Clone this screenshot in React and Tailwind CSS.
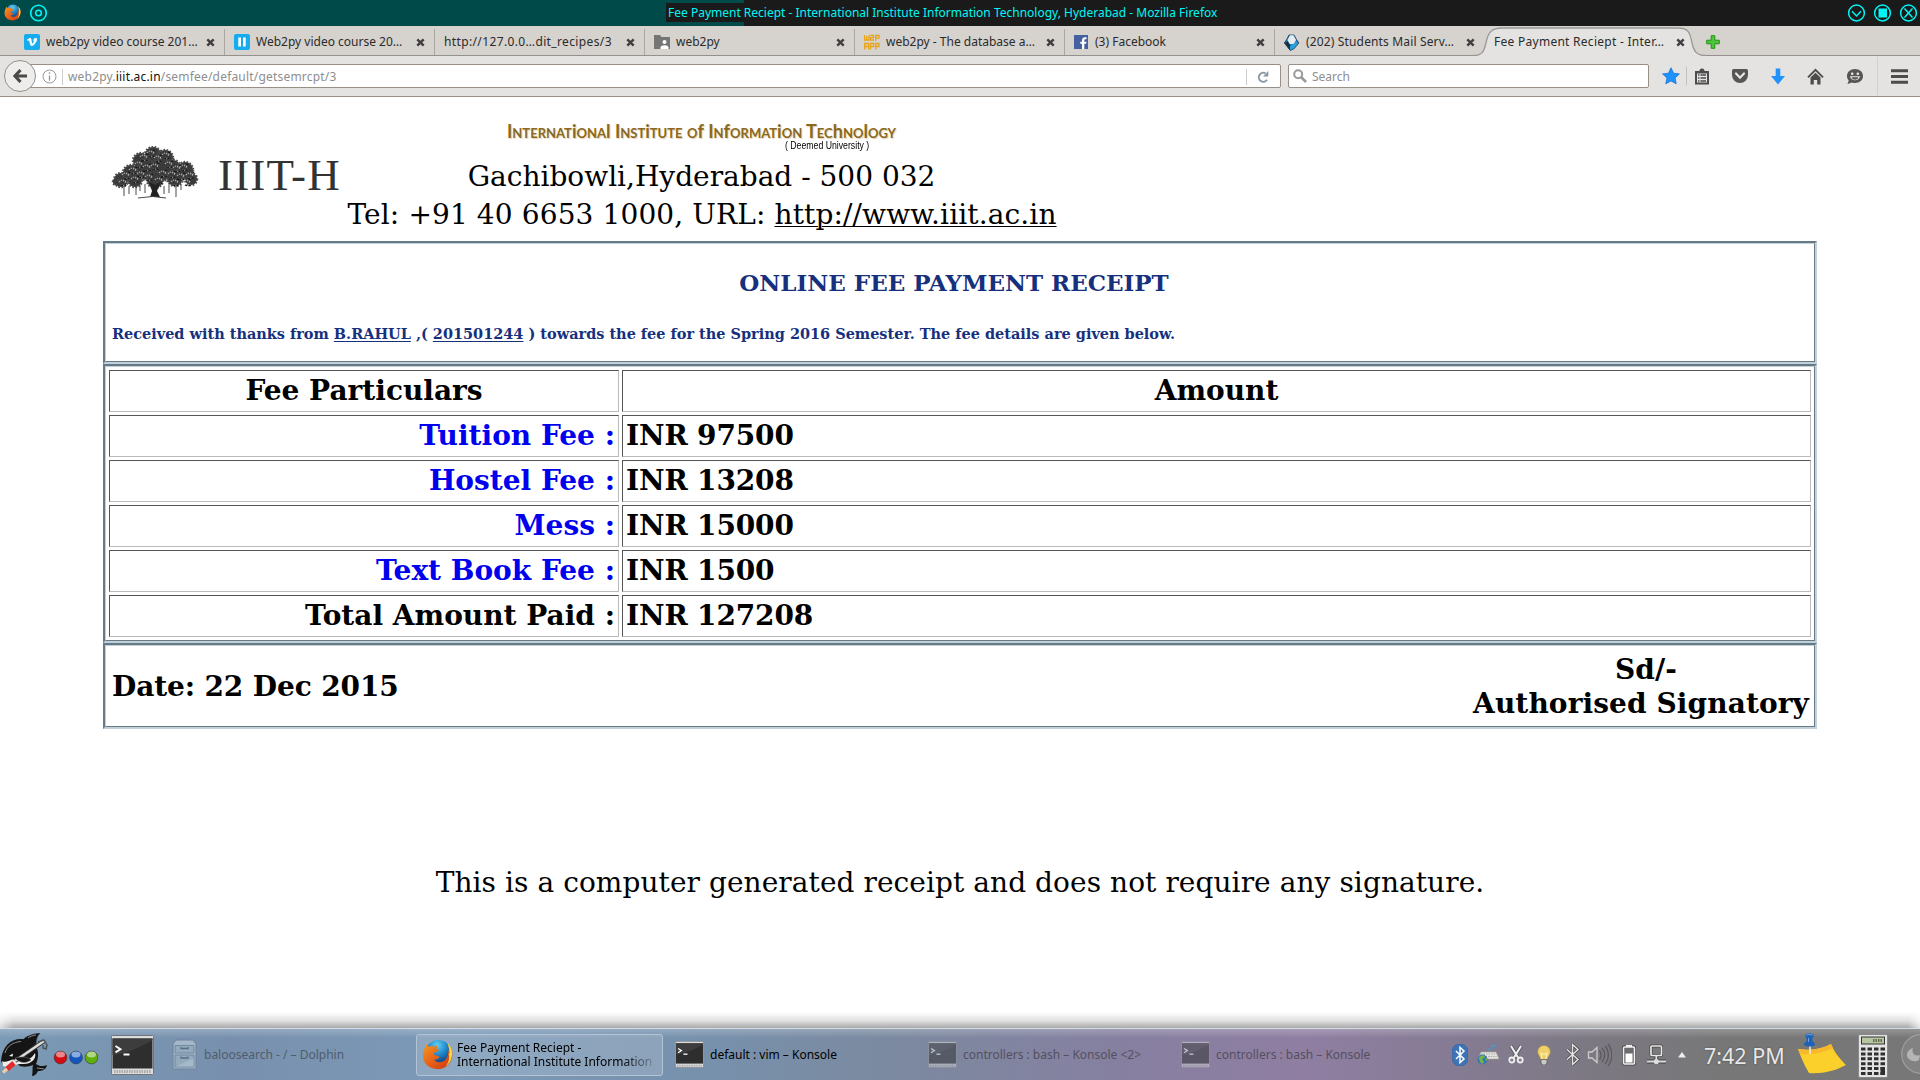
import React from 'react';

const UI = 'font-["Noto_Sans",sans-serif]';
const SERIF = 'font-["DejaVu_Serif",serif]';

/* ---------- icons ---------- */

function Firefox({ size, id }) {
  return (
    <svg width={size} height={size} viewBox="0 0 32 32" className="shrink-0">
      <defs>
        <radialGradient id={id + 'b'} cx="0.45" cy="0.2" r="0.8">
          <stop offset="0" stopColor="#5fd0f5" />
          <stop offset="0.5" stopColor="#1c7fc4" />
          <stop offset="1" stopColor="#122a66" />
        </radialGradient>
        <linearGradient id={id + 'o'} x1="0" y1="0" x2="1" y2="1">
          <stop offset="0" stopColor="#f39a1f" />
          <stop offset="0.5" stopColor="#e8611a" />
          <stop offset="1" stopColor="#c73514" />
        </linearGradient>
      </defs>
      <circle cx="17" cy="14.5" r="13.5" fill={`url(#${id}b)`} />
      <path d="M27 5c4 4 5 9 4 14-2 8-8 12-15 12C7 31 1 25 1 17c0-4 1-6 2-8l1-4 3 3c2-1 4-1 6 0l3-2-1 4c2 0 2 1 2 2l-4 2c-2 2 0 3 2 3l3 1c-1 3-5 4-6 3 2 3 6 4 10 2 4-2 6-8 5-12l2 1c0-3-1-5-2-7z" fill={`url(#${id}o)`} />
      <path d="M26 4c5 4 6 10 4.500 15-1 4-3 7-6 9 4-5 4-9 3-13l1 0c0-4-1-8-2.500-11z" fill="#fbd83a" />
    </svg>
  );
}

function CloseX() {
  return (
    <svg width="9" height="9" viewBox="0 0 9 9" className="shrink-0">
      <path d="M1.300 1.300l6.400 6.400M7.700 1.300L1.300 7.700" stroke="#3f3f3f" strokeWidth="2.400" />
    </svg>
  );
}

const Vimeo = () => (
  <svg width="16" height="16" viewBox="0 0 16 16" className="shrink-0">
    <rect width="16" height="16" rx="2" fill="#16adee" />
    <path d="M3 5.800L5.600 4c1-.4 1.600.3 1.800 1.400l.6 3.300c.2.900.6.900 1 .2l.8-1.500c.3-.7 0-1-.8-.8C9.500 4.800 10.600 4 11.800 4c1.300.1 1.600 1.200 1 2.800-.8 2-2.900 4.700-4.600 5.200-1.200.2-1.800-.6-2.100-1.700l-.9-3.500c-.2-.6-.6-.4-1.400.1z" fill="#fff" />
  </svg>
);
const Pause = () => (
  <svg width="16" height="16" viewBox="0 0 16 16" className="shrink-0">
    <rect width="16" height="16" rx="2" fill="#16adee" />
    <path d="M4.300 3.500h2.700v9H4.300zM9 3.500h2.700v9H9z" fill="#fff" />
  </svg>
);
const Folder = () => (
  <svg width="16" height="16" viewBox="0 0 16 16" className="shrink-0">
    <path d="M0 1h6l1.500 2H16v12H0z" fill="#757575" />
    <circle cx="10.500" cy="8" r="2" fill="#fff" />
    <path d="M6.500 15v-1.500c0-3 8-3 8 0V15z" fill="#fff" />
  </svg>
);
const W2p = () => (
  <svg width="16" height="16" viewBox="0 0 16 16" className="shrink-0" fill="none" stroke="#e8a317" strokeWidth="1.300">
    <path d="M.5 1v5h4.500V1M2.700 2v4M6.300 1.500H9.500v2.200H6.500v2.300H10M11.700 7v-5.500h3.300v2.700h-3.300M.7 15.500V9.500h4V15.500M.7 12.500h4M6.500 15.500v-6H9.700v3H6.500M11.700 15.500v-6h3.300v3h-3.300" />
  </svg>
);
const Facebook = () => (
  <svg width="14" height="14" viewBox="0 0 14 14" className="shrink-0">
    <rect width="14" height="14" fill="#4460a0" />
    <path d="M8 14V8.800H6.300V6.700H8V5.200c0-2 1.200-3 3-3h1.500v2h-1c-1 0-1.200.4-1.200 1.200v1.300h2.200l-.3 2.100h-1.900V14z" fill="#fff" />
  </svg>
);
const Zimbra = () => (
  <svg width="15" height="17" viewBox="0 0 15 17" className="shrink-0">
    <path d="M3 5L5 1h5l2.500 4.500 2.300 3.500-4.500 5.500-4 2L.3 9z" fill="#1d7fb8" stroke="#173a55" strokeWidth=".8" />
    <path d="M3.500 6L6 1.300h3.500L12 6l-2 4H5z" fill="#e6edf2" />
    <path d="M.8 9l3-2 3 5-1 4z" fill="#17334a" />
    <path d="M6 12l6-4 2 1-3.800 5-4 2z" fill="#2aa0dd" />
  </svg>
);

/* ---------- browser chrome ---------- */

function TitleBar() {
  return (
    <div className="flex h-[26px] items-center bg-[linear-gradient(to_right,#004b49_744px,#1a1a1a_744px)]">
      <div className="flex w-[666px] items-center gap-[9px] pb-px pl-1">
        <Firefox size={17} id="tf" />
        <svg width="18" height="18" viewBox="0 0 18 18" fill="none" stroke="#00f6f6">
          <circle cx="8.500" cy="9" r="7.800" strokeWidth="1.600" />
          <circle cx="8.500" cy="9" r="2.800" strokeWidth="1.500" />
        </svg>
      </div>
      <div className={`${UI} -mt-px h-[19px] w-[555px] whitespace-nowrap bg-[#1a1a1a] pl-[2px] text-[12px] leading-[19px] text-[#00f6f6]`}>
        Fee Payment Reciept - International Institute Information Technology, Hyderabad - Mozilla Firefox
      </div>
      <svg width="71" height="18" viewBox="0 0 71 18" fill="none" stroke="#00f6f6" strokeWidth="1.500" className="mb-px ml-auto mr-[2px]">
        <circle cx="9.500" cy="9" r="7.900" />
        <path d="M5 7.300l4.500 4.700L14 7.300" />
        <circle cx="35.500" cy="9" r="7.900" />
        <rect x="31.500" y="4.500" width="8.500" height="9" fill="#00f6f6" stroke="none" />
        <circle cx="61.500" cy="9" r="7.900" />
        <path d="M57.500 4.500l8 9M65.500 4.500l-8 9" />
      </svg>
    </div>
  );
}

const TABS = [
  { icon: <Vimeo />, gap: 'gap-[6px]', label: 'web2py video course 201…', track: '' },
  { icon: <Pause />, gap: 'gap-[6px]', label: 'Web2py video course 20…', track: '' },
  { icon: null, gap: '', label: 'http://127.0.0…dit_recipes/3', track: 'tracking-[0.37px]' },
  { icon: <Folder />, gap: 'gap-[6px]', label: 'web2py', track: '' },
  { icon: <W2p />, gap: 'gap-[6px]', label: 'web2py - The database a…', track: '' },
  { icon: <Facebook />, gap: 'gap-[7px]', label: '(3) Facebook', track: '' },
  { icon: <Zimbra />, gap: 'gap-[7px]', label: '(202) Students Mail Serv…', track: 'tracking-[0.15px]' },
];

function TabStrip() {
  return (
    <div className={`${UI} flex h-[30px] border-b border-[#93908d] bg-[#d6d2ce] pl-[15px] text-[12px] text-[#2b2b2b]`}>
      {TABS.map((t, i) => (
        <div key={i} className="flex w-[210px] items-center pb-[1px] pt-[4px]">
          <div className={`flex h-full flex-1 items-center whitespace-nowrap pl-[9px] ${t.gap}`}>
            {t.icon}
            <span className={t.track}>{t.label}</span>
          </div>
          <CloseX />
          <div className={i === 6 ? 'ml-[9px] w-px' : 'ml-[9px] h-[26px] w-px bg-[#aaa6a2]'} />
        </div>
      ))}
      <div className="relative flex w-[210px] items-center pb-[1px] pt-[4px]">
        <svg width="240" height="30" viewBox="0 0 240 30" className="absolute -left-[12px] top-0">
          <path d="M0 30C9 30 11 26 13 17 15 6 19 2 29 2h176c10 0 12 4 14 15 2 9 5 13 14 13z" fill="#e5e3e1" />
          <path d="M0 29.500C9 29.500 11 26 13 17 15 6 19 2 29 2h176c10 0 12 4 14 15 2 9 5 12.500 14 12.500" fill="none" stroke="#9a9797" strokeWidth="1.300" />
        </svg>
        <span className="relative flex-1 whitespace-nowrap pl-[9px] tracking-[0.27px]">Fee Payment Reciept - Inter…</span>
        <span className="relative mr-[10px] flex"><CloseX /></span>
      </div>
      <svg width="14" height="14" viewBox="0 0 14 14" className="relative ml-[11px] mt-[9px]">
        <path d="M5.200.7h3.600v4.500h4.500v3.600H8.800v4.500H5.200V8.800H.7V5.200h4.500z" fill="#4fc53c" stroke="#1f9410" />
      </svg>
    </div>
  );
}

function NavBar() {
  return (
    <div className={`${UI} flex h-[41px] items-center border-b border-[#989087] bg-[#e5e3e1] text-[12px]`}>
      <div className="z-10 ml-[4px] flex size-[32px] shrink-0 items-center justify-center rounded-full border border-[#989087] bg-[#eeedec]">
        <svg width="16" height="16" viewBox="0 0 16 16">
          <path d="M8.500 2L3 8l5.500 6M3.500 8H15" fill="none" stroke="#4a4a4a" strokeWidth="3.200" />
        </svg>
      </div>
      <div className="-ml-[8px] flex h-[24px] w-[1253px] items-center rounded-r-[2px] border border-[#989087] bg-white pt-px">
        <svg width="15" height="15" viewBox="0 0 15 15" className="ml-[13px]" fill="none" stroke="#999">
          <circle cx="7.500" cy="7.500" r="6.500" />
          <path d="M7.500 6.500v5M7.500 3.300v1.700" strokeWidth="1.300" />
        </svg>
        <div className="ml-[5px] h-[16px] w-px bg-[#ccc]" />
        <div className="ml-[5px] tracking-[0.19px] text-[#8e8e8e]">
          web2py.<span className="text-[#111]">iiit.ac.in</span>/semfee/default/getsemrcpt/3
        </div>
        <div className="ml-auto h-[16px] w-px bg-[#ccc]" />
        <svg width="14" height="14" viewBox="0 0 14 14" className="ml-[9px] mr-[10px]">
          <path d="M9.500 3.300A4.500 4.500 0 1 0 11 9.800" fill="none" stroke="#8a98a5" strokeWidth="2" />
          <path d="M12.300 1v5.500H7z" fill="#8a98a5" />
        </svg>
      </div>
      <div className="ml-[7px] flex h-[24px] w-[361px] items-center rounded-[2px] border border-[#989087] bg-white pt-px text-[#8e8e8e]">
        <svg width="14" height="14" viewBox="0 0 14 14" className="mb-[2px] ml-[4px] mr-[5px]" fill="none" stroke="#999">
          <circle cx="5.200" cy="5.200" r="4" strokeWidth="2" />
          <path d="M8 8l5 5" strokeWidth="2.600" />
        </svg>
        <span>Search</span>
      </div>
      <div className="flex flex-1 items-center">
        <svg width="18" height="18" viewBox="0 0 18 18" className="ml-[13px]">
          <path d="M9 .8l2.500 5.400 5.900.7-4.400 4 1.200 5.900L9 13.900l-5.200 2.900L5 10.900l-4.400-4 5.900-.7z" fill="#1f93fb" stroke="#1071d6" strokeWidth=".8" />
        </svg>
        <div className="ml-[6px] h-[18px] w-px bg-[#c4c1be]" />
        <svg width="16" height="17" viewBox="0 0 16 17" className="ml-[7px]">
          <path d="M1 3h4.500a2.500 2.500 0 0 1 5 0H15v13.500H1z" fill="#4c4c4c" />
          <path d="M3 5.500h10v9H3z" fill="#e5e3e1" />
          <path d="M4 7h1.500M6.500 7H12M4 10h1.500M6.500 10H12M4 13h1.500M6.500 13H12" stroke="#4c4c4c" strokeWidth="1.500" />
        </svg>
        <svg width="18" height="16" viewBox="0 0 18 16" className="ml-[21px]">
          <path d="M2.500 1h13a1.500 1.500 0 0 1 1.500 1.500V7a8 8 0 0 1-16 0V2.500A1.500 1.500 0 0 1 2.500 1z" fill="#565656" />
          <path d="M5 5.500L9 9.700l4-4.200" fill="none" stroke="#e9e8e6" strokeWidth="2.200" strokeLinecap="round" />
        </svg>
        <svg width="16" height="17" viewBox="0 0 16 17" className="ml-[21px]">
          <path d="M5.700.5h4.600v7.500H15L8 16.500 1 8h4.700z" fill="#1f93fb" />
        </svg>
        <svg width="17" height="17" viewBox="0 0 17 17" className="ml-[21px]">
          <path d="M1 9.300L8.500 1.800 16 9.300" fill="none" stroke="#4c4c4c" strokeWidth="1.900" />
          <path d="M3.500 9.500l5-4.800 5 4.800v7h-3.300V12H6.800v4.500H3.500z" fill="#4c4c4c" />
        </svg>
        <svg width="18" height="17" viewBox="0 0 18 17" className="ml-[22px]">
          <path d="M9 1c4.700 0 8 3 8 7s-3.300 7-8 7c-1 0-2-.1-3-.5L1.500 16l1.200-3.500C1.600 11.300 1 9.700 1 8c0-4 3.300-7 8-7z" fill="#565656" />
          <circle cx="6.200" cy="5.800" r="1.300" fill="#e9e8e6" />
          <circle cx="11.800" cy="5.800" r="1.300" fill="#e9e8e6" />
          <path d="M4 8.300h10c-.8 5.200-9.200 5.200-10 0z" fill="#e9e8e6" />
          <path d="M5.500 9.300h7c-.8 3.200-6.200 3.200-7 0z" fill="#565656" />
        </svg>
        <div className="ml-[13px] h-[38px] w-px bg-[#d3d0cd]" />
        <svg width="17" height="15" viewBox="0 0 17 15" className="ml-[13px]">
          <path d="M0 1.700h17M0 7.500h17M0 13.300h17" stroke="#4c4c4c" strokeWidth="3" />
        </svg>
      </div>
    </div>
  );
}

/* ---------- page ---------- */

const CANOPY = [
  [10, 34, 8], [20, 27, 9], [30, 15, 9], [42, 9, 9], [54, 12, 9], [62, 21, 8], [74, 24, 9], [80, 33, 7],
  [36, 24, 11], [50, 24, 12], [64, 32, 9], [24, 34, 8], [44, 34, 9], [5, 36, 4],
];
const LIGHTS = [
  [15, 29], [22, 24], [28, 18], [33, 11], [40, 7], [47, 12], [55, 9], [58, 18], [66, 22], [73, 21], [79, 29],
  [70, 30], [61, 28], [52, 27], [44, 20], [36, 21], [30, 28], [24, 33], [38, 31], [48, 34], [12, 36], [64, 36], [76, 36],
];

function Banyan() {
  return (
    <svg width="88" height="54" viewBox="0 0 88 54" className="shrink-0">
      <g fill="#3a3a3a" stroke="#4a4a4a" strokeWidth="2.500" strokeDasharray="1.500 1.500">
        {CANOPY.map(([x, y, r], i) => <circle key={i} cx={x} cy={y} r={r - 1} />)}
      </g>
      <g fill="none" stroke="#a8a8a8" strokeWidth="1.200" strokeDasharray="1.300 1">
        {LIGHTS.map(([x, y], i) => <path key={i} d={`M${x - 4} ${y}q3-4 7 1m-5 2l5 1m-3-6l4 2`} />)}
      </g>
      <g fill="none" stroke="#161616" strokeWidth="1.300" strokeDasharray="2 1.500">
        {LIGHTS.map(([x, y], i) => <path key={i} d={`M${x - 2} ${y + 3}q4 2 6-1m-2-5l3 1`} />)}
      </g>
      <path d="M38 36l3 9-2 6h10l-3-6 4-10-5 4z" fill="#222" />
      <path d="M13 40v10M18 40v8M25 39v10M29 39v6M34 38v9M53 40v8M58 39v8M65 38v13M70 38v6M27 52q15-3 28 0" stroke="#4a4a4a" strokeWidth="1" fill="none" />
    </svg>
  );
}

const INSTITUTE = 'International Institute of Information Technology';

/* Display lettering: small capitals in which some letters keep their lowercase form. */
function InstituteName() {
  return (
    <div className="whitespace-nowrap font-['Lato',sans-serif] text-[18px] font-bold leading-[18px] text-[#8a6820] [text-shadow:1px_1px_1px_#e3d2b4]">
      {INSTITUTE.split(/([lfih])/).map((part, i) => (
        <span key={i} className={i % 2 ? '' : '[font-variant-caps:small-caps]'}>{part}</span>
      ))}
    </div>
  );
}

const ROWS = [
  ['Tuition Fee :', 'INR 97500', true],
  ['Hostel Fee :', 'INR 13208', true],
  ['Mess :', 'INR 15000', true],
  ['Text Book Fee :', 'INR 1500', true],
  ['Total Amount Paid :', 'INR 127208', false],
];

const CELL = 'h-[42px] border border-b-[#bbb] border-l-[#555] border-r-[#bbb] border-t-[#555] px-[3px] leading-[40px]';

/* Three-pixel grooved frame: a dark and a light line on every side. */
function Frame({ className, children }) {
  return (
    <div className="border-2 border-b-[#c3d0d9] border-l-[#667987] border-r-[#c3d0d9] border-t-[#667987]">
      <div className={`border border-b-[#667987] border-l-[#c3d0d9] border-r-[#667987] border-t-[#c3d0d9] ${className}`}>
        {children}
      </div>
    </div>
  );
}

function Receipt() {
  return (
    <div className={`${SERIF} h-[931px] bg-white text-[28px] text-black`}>
      <div className="mx-auto w-[1714px]">
        <header className="flex h-[144px]">
          <div className="flex w-[244px] items-center pl-[8px] pt-[8px]">
            <Banyan />
            <span className="ml-[19px] mt-[4px] whitespace-nowrap font-['Liberation_Serif',serif] text-[45px] leading-[50px] tracking-[1.2px] text-[#333]">IIIT-H</span>
          </div>
          <div className="w-[709px]">
            <div className="ml-[160px] h-[61px] pt-[25px]">
              <InstituteName />
              <div className="-mt-px ml-[278px] w-[100px] origin-left scale-x-[0.83] whitespace-nowrap font-['Liberation_Sans',sans-serif] text-[10.500px] leading-[12px]">( Deemed University )</div>
            </div>
            <div className="text-center leading-[38px]">Gachibowli,Hyderabad - 500 032</div>
            <div className="-ml-[2px] -mr-[3px] whitespace-nowrap text-center leading-[38px] tracking-[0.12px]">
              Tel: +91 40 6653 1000, URL:{' '}
              <span className="underline decoration-1 underline-offset-[2px]">http://www.iiit.ac.in</span>
            </div>
          </div>
        </header>

        <Frame className="h-[119px] px-[6px] font-bold text-[#16307e]">
          <h1 className="pr-[12px] pt-[24px] text-center text-[23px] leading-[29px]">ONLINE FEE PAYMENT RECEIPT</h1>
          <p className="mt-[27px] whitespace-nowrap text-[14.480px] leading-[20px]">
            Received with thanks from <span className="underline decoration-1 underline-offset-[2px]">B.RAHUL</span> ,({' '}
            <span className="underline decoration-1 underline-offset-[2px]">201501244</span> ) towards the fee for the
            Spring 2016 Semester. The fee details are given below.
          </p>
        </Frame>

        <Frame className="p-[3px] font-bold">
          <div className="grid grid-cols-[510px_1fr] gap-[3px]">
            <div className={`${CELL} text-center`}>Fee Particulars</div>
            <div className={`${CELL} text-center`}>Amount</div>
            {ROWS.map(([name, amount, blue]) => (
              <React.Fragment key={name}>
                <div className={`${CELL} text-right ${blue ? 'text-[#0000ee]' : ''}`}>{name}</div>
                <div className={`${CELL} tracking-[-0.15px]`}>{amount}</div>
              </React.Fragment>
            ))}
          </div>
        </Frame>

        <Frame className="flex h-[82px] items-center justify-between pl-[6px] pr-[5px] pt-[2px] font-bold">
          <div className="tracking-[-0.13px]">Date: 22 Dec 2015</div>
          <div className="text-center leading-[34px] tracking-[0.1px]">
            <div className="pl-[10px]">Sd/-</div>
            <div>Authorised Signatory</div>
          </div>
        </Frame>
      </div>
      <p className="mt-[137px] text-center leading-[34px] tracking-[0.07px]">
        This is a computer generated receipt and does not require any signature.
      </p>
    </div>
  );
}

/* ---------- task bar ---------- */

function Orca() {
  return (
    <svg width="48" height="44" viewBox="0 0 48 44" className="ml-[1px] shrink-0">
      <path d="M22 7C25 3 32 1 39 0c-3 3-4 7-4 12z" fill="#151515" stroke="#333" strokeWidth=".6" />
      <path d="M0 28C1 14 9 6 20 6c11 0 18 7 17 17-.3 3-1 6-2 8 3 2 6 3 11 1-1 5-5 6-9 6-1 3-4 5-6 5 1-4 0-8 1-11-5 2-12 3-16-1-4-3-9 2-14 1z" fill="#151515" />
      <path d="M1 28c4 3 9-3 15-1 6 3 13 1 18-7 2 6-5 12-13 11-7-1-12 5-19 2z" fill="#ececec" />
      <path d="M8 23l4-2.500-.5 3z" fill="#fff" />
      <path d="M4 20C6 13 12 9 20 8.500M27 5c2-1.500 5-2.500 8-3M36 35l7 1" stroke="#8b8b8b" fill="none" />
      <path d="M14 28L43 8" stroke="#333" strokeWidth="4" />
      <path d="M14 28L43 8" stroke="#ddd" strokeWidth="2.400" />
      <path d="M6 36l7-6" stroke="#e32b2b" strokeWidth="5" />
      <path d="M2 39.500l4-3.500" stroke="#f0cfa0" strokeWidth="3" />
      <path d="M37 9l6-2 3 5-1 4-3-1v-3" fill="none" stroke="#4a5258" strokeWidth="1.400" />
      <path d="M14 25c4 5 11 6 16 2-3-3-9-4-16-2z" fill="#151515" stroke="#777" strokeWidth=".5" />
    </svg>
  );
}

function Balls() {
  return (
    <svg width="45" height="15" viewBox="0 0 45 15" className="ml-[4px] mt-[5px] shrink-0">
      {['#d40b12', '#1456c0', '#5fae0a'].map((c, i) => (
        <g key={c}>
          <circle cx={7.500 + i * 15.500} cy="7.500" r="6.400" fill={c} stroke="#2b3440" strokeOpacity=".55" />
          <ellipse cx={7.500 + i * 15.500} cy="4.500" rx="4.500" ry="3" fill="#fff" fillOpacity=".5" />
        </g>
      ))}
    </svg>
  );
}

function Konsole({ w, h, dim, className = '' }) {
  return (
    <svg width={w} height={h} viewBox="0 0 43 40" preserveAspectRatio="none" className={`shrink-0 ${dim ? 'opacity-50' : ''} ${className}`}>
      <rect x=".5" y=".5" width="42" height="39" rx="1" fill="#dcdcdc" stroke="#70757a" />
      <rect x="1.500" y="3.500" width="40" height="30" fill="#2e2e2e" />
      <path d="M1.500 20C14 19 28 13 41.500 5V3.500h-40z" fill="#3d3d3d" />
      <path d="M4.500 11l5 3.200-5 3.200" fill="none" stroke="#fff" strokeWidth="1.900" />
      <path d="M12.500 19.500h6" stroke="#fff" strokeWidth="2" />
      <path d="M3 36.500h37" stroke="#aaa" strokeWidth="3" strokeDasharray="1.500 1" />
    </svg>
  );
}

function Cabinet() {
  return (
    <svg width="25" height="31" viewBox="0 0 25 31" className="ml-[18px] shrink-0 opacity-75">
      <path d="M4 1h17l3 4v25H1V5z" fill="#b4c5d2" stroke="#687f93" />
      <path d="M3 6.500h19v7.500H3zM3 16h19v12H3z" fill="#9db2c2" stroke="#71889b" />
      <path d="M9 8v1.500h7V8M9 17.500V19h7v-1.500" fill="none" stroke="#4d6375" strokeWidth="1.300" />
      <path d="M3.500 27.500l18-8v8z" fill="#b5c6d2" />
    </svg>
  );
}

function Tray() {
  return (
    <>
      <svg width="16" height="22" viewBox="0 0 16 22" className="ml-[80px] shrink-0">
        <rect width="16" height="22" rx="7.500" fill="#3d74b8" stroke="#2c5c9b" strokeWidth=".5" />
        <path d="M4 7l8 8-4 3.500v-15L12 7l-8 8" fill="none" stroke="#fff" strokeWidth="1.500" />
      </svg>
      <svg width="22" height="20" viewBox="0 0 22 20" className="ml-[9px] shrink-0">
        <path d="M12 6c-3-3 5-2 3-4s3-1 5-1" fill="none" stroke="#5f91b5" strokeWidth="1.500" />
        <path d="M4 7h15l3 7H1z" fill="#e3e3de" stroke="#a5a59f" strokeWidth=".6" />
        <path d="M4 9h15M3.500 11.500h16" stroke="#aaa" strokeDasharray="1.500 1" />
        <circle cx="5.500" cy="14.500" r="5" fill="#3a76b5" />
        <path d="M2 12l4-2 2 2-3 2 2 3-2 2c-2-2-3-4-3-7zM8 14l2-1v3z" fill="#79b63c" />
      </svg>
      <svg width="16" height="19" viewBox="0 0 16 19" className="ml-[9px] shrink-0" fill="none">
        <path d="M3 1l7 11.500M13 1L6 12.500" stroke="#4d4d52" strokeWidth="3.600" />
        <g stroke="#eee">
          <path d="M3 1l7 11.500M13 1L6 12.500" strokeWidth="2.200" />
          <circle cx="3.800" cy="15" r="2.500" strokeWidth="1.800" />
          <circle cx="12.200" cy="15" r="2.500" strokeWidth="1.800" />
        </g>
      </svg>
      <svg width="14" height="20" viewBox="0 0 14 20" className="ml-[13px] shrink-0">
        <path d="M7 .5a6.300 6.300 0 0 1 6.300 6.300c0 3.200-2.800 4.700-3 7.700H3.700c-.2-3-3-4.500-3-7.700A6.300 6.300 0 0 1 7 .5z" fill="#f0d069" stroke="#b79545" strokeWidth=".6" />
        <path d="M5 14l-1-6 3 1.500L10 8l-1 6" fill="none" stroke="#fff4c2" />
        <path d="M4 14.500h6v3.500l-2 2H6l-2-2z" fill="#c9c9c9" stroke="#555" strokeWidth=".7" />
      </svg>
      <svg width="16" height="23" viewBox="0 0 16 23" className="ml-[14px] shrink-0" fill="none">
        <path d="M2 6.500l11 10-5.500 5V1.500l5.500 5-11 10" stroke="#4d4d52" strokeWidth="3" />
        <path d="M2 6.500l11 10-5.500 5V1.500l5.500 5-11 10" stroke="#e4e4e4" strokeWidth="1.400" />
      </svg>
      <svg width="25" height="24" viewBox="0 0 25 24" className="ml-[6px] shrink-0" fill="none" stroke="#5b5960" strokeWidth="1.300">
        <path d="M1.500 9h3.500l5-4.500v15L5 15H1.500z" stroke="#ccc" />
        <path d="M12.500 7.500c2 2.500 2 6.500 0 9M15 5c3.500 4 3.500 10 0 14M18 3c4.500 5 4.500 13 0 18M21 1c5 6 5 16 0 22" />
      </svg>
      <svg width="14" height="22" viewBox="0 0 14 22" className="ml-[10px] shrink-0">
        <rect x="1.200" y="2.700" width="11.600" height="17.600" rx="1" fill="none" stroke="#444" strokeWidth="2.400" />
        <path d="M4 1h6v2H4z" fill="#f0f0f0" />
        <rect x="1.500" y="3" width="11" height="17" rx="1" fill="#6b6b70" stroke="#f0f0f0" strokeWidth="1.500" />
        <rect x="3.500" y="9.500" width="7" height="9" fill="#fff" />
      </svg>
      <svg width="21" height="22" viewBox="0 0 21 22" className="ml-[10px] shrink-0" fill="none">
        <rect x="5" y="2" width="10.500" height="9.500" rx="1" stroke="#444" strokeWidth="3" />
        <path d="M10.300 12v4M1 17.500h19" stroke="#444" strokeWidth="4" />
        <rect x="5" y="2" width="10.500" height="9.500" rx="1" stroke="#e6e6e6" strokeWidth="1.700" />
        <path d="M10.300 12v4M1 17.500h19" stroke="#dcdcdc" strokeWidth="1.800" />
        <circle cx="10.300" cy="17.500" r="2.600" fill="#dcdcdc" />
      </svg>
      <svg width="8" height="6" viewBox="0 0 8 6" className="ml-[11px] shrink-0">
        <path d="M4 0l4 5.500H0z" fill="#eee" />
      </svg>
      <div className={`${UI} ml-[18px] mt-[2px] w-[94px] whitespace-nowrap text-[21.500px] leading-[28px] text-[#e8e8e8] [text-shadow:0_0_2px_#444]`}>7:42 PM</div>
      <svg width="49" height="42" viewBox="0 0 49 42" className="-mt-px shrink-0">
        <path d="M0 16c12 2 24 0 33-5 3 8 9 15 15 21-11 6-24 9-37 8C6 32 3 24 0 16z" fill="#fbd02a" />
        <path d="M0 16c12 2 24 0 33-5l2 4c-9 5-22 7-33 6z" fill="#f7b82b" />
        <path d="M12 12v9" stroke="#eee" strokeWidth="1.500" />
        <path d="M7.500 1.500c2-1.500 6-1.500 8 0v2.500L14.500 5v3.500c1.500.5 2.500 2 2.500 3.500-3 2-8 2-11 0 0-1.500 1-3 2.500-3.500V5L7.500 4z" fill="#1e62b8" />
        <path d="M8.500 2.200c2-.8 4-.8 6 0M10.500 5v4" stroke="#6aa6e8" fill="none" />
      </svg>
      <svg width="30" height="44" viewBox="0 0 30 44" className="ml-[11px] mt-[3px] shrink-0">
        <rect x=".5" y=".5" width="29" height="43" rx="1.500" fill="#e4e4e4" stroke="#888" />
        <rect x="3.500" y="3" width="23" height="7" fill="#b7c6a0" stroke="#333" />
        <path d="M15 6.500h9" stroke="#5f6b52" strokeWidth="3" strokeDasharray="1.500 1" />
        {[0, 1, 2, 3, 4, 5].map((r) => (
          <path key={r} d={`M3 ${15 + r * 4.900}h24`} stroke="#2f2f2f" strokeWidth="3" strokeDasharray="4.500 2" />
        ))}
        <rect x="22.500" y="33" width="4.500" height="8" fill="#2f2f2f" />
      </svg>
      <svg width="19" height="42" viewBox="0 0 19 42" className="ml-auto shrink-0">
        <circle cx="20" cy="20" r="19.300" fill="#828282" stroke="#a0a0a0" strokeWidth="1.200" />
        <path d="M12 14c-4 1-8 6-5 10 3 4 8 4 11 2l1-5c-5 2-9-2-7-7z" fill="#b5b5b5" />
      </svg>
    </>
  );
}

const TASK = `${UI} whitespace-nowrap text-[12px] leading-[14px]`;

function TaskBar() {
  return (
    <div className="relative flex h-[52px] shrink-0 items-center border-t border-[#d3dde5] bg-[linear-gradient(to_right,#7a9ab5_0%,#7890ad_12%,#7c9ab8_24%,#7791ad_36%,#7b8aa0_46%,#8680a0_58%,#8f7ea2_68%,#857b93_76%,#7b7880_84%,#777_90%)]">
      <div className="pointer-events-none absolute inset-x-0 -top-[17px] h-[16px] bg-[linear-gradient(to_bottom,rgba(0,0,0,0),rgba(0,0,0,.12)_55%,rgba(0,0,0,.34))] [mask-image:linear-gradient(to_right,rgba(0,0,0,.4),#000_14px,#000_1908px,rgba(0,0,0,.3))]" />
      <div className="pointer-events-none absolute inset-0 bg-[linear-gradient(to_bottom,rgba(255,255,255,.22),rgba(255,255,255,0)_9px)]" />
      <div className="relative flex h-full w-full items-center">
        <Orca />
        <Balls />
        <Konsole w={43} h={40} className="ml-[13px]" />
        <Cabinet />
        <div className={`${TASK} ml-[7px] w-[212px] text-[#4f5d6b]`}>baloosearch - / – Dolphin</div>
        <div className="flex h-[42px] w-[247px] items-center rounded-[3px] border border-[#b4c4d4] bg-white/15 pl-[5px]">
          <Firefox size={31} id="kf" />
          <div className={`${TASK} ml-[4px] w-[202px] text-black [mask-image:linear-gradient(to_right,#000_165px,transparent_202px)]`}>
            <div>Fee Payment Reciept -</div>
            <div>International Institute Information</div>
          </div>
        </div>
        <Konsole w={29} h={27} className="ml-[12px]" />
        <div className={`${TASK} ml-[6px] w-[218px] text-black`}>default : vim – Konsole</div>
        <Konsole w={29} h={27} dim />
        <div className={`${TASK} ml-[6px] w-[218px] text-[#54505f]`}>controllers : bash – Konsole &lt;2&gt;</div>
        <Konsole w={29} h={27} dim />
        <div className={`${TASK} ml-[6px] w-[156px] text-[#54505f]`}>controllers : bash – Konsole</div>
        <Tray />
      </div>
    </div>
  );
}

export default function App() {
  return (
    <div className="flex h-[1080px] w-[1920px] flex-col overflow-hidden bg-white">
      <TitleBar />
      <TabStrip />
      <NavBar />
      <Receipt />
      <TaskBar />
    </div>
  );
}
